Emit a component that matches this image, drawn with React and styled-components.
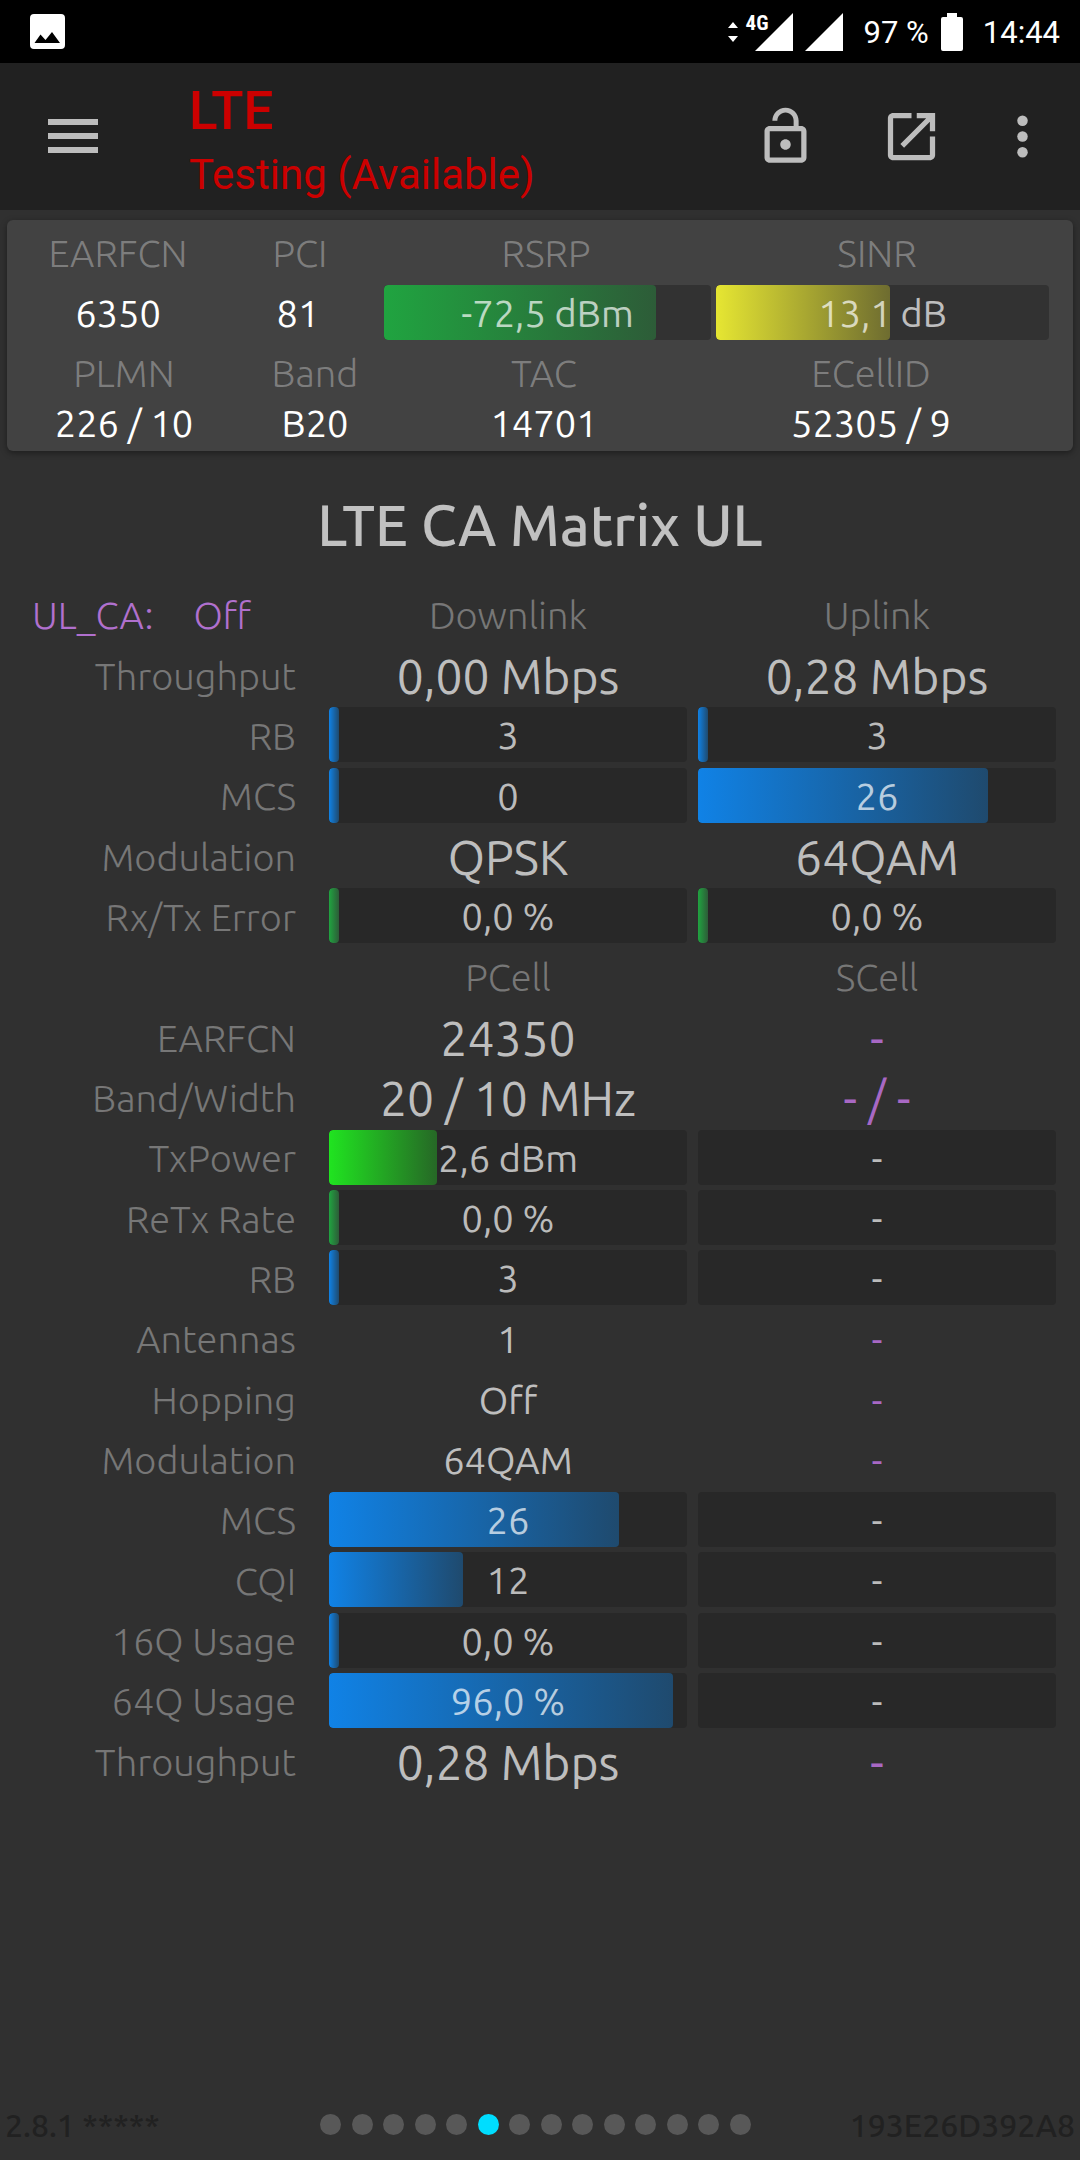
import React from 'react';
import styled, { createGlobalStyle } from 'styled-components';

const GlobalStyle = createGlobalStyle`
  * {
    box-sizing: border-box;
  }

  body {
    margin: 0;
    background: #303030;
    color: rgba(255, 255, 255, 0.7);
    font-family: Ubuntu, 'Noto Sans', 'Open Sans', sans-serif;
    font-size: 38px;
    line-height: 50px;
  }
`;

const Page = styled.div`
  display: flex;
  flex-direction: column;
  min-height: 100vh;
`;

const StatusBar = styled.div`
  display: flex;
  align-items: center;
  justify-content: space-between;
  height: 63px;
  padding: 0 20px 0 30px;
  background: #000;
  color: #fff;
  font-family: Roboto, sans-serif;
  font-size: 31px;
  line-height: 36px;

  & svg {
    display: block;
    fill: #fff;
  }
`;

const StatusGroup = styled.div`
  display: flex;
  align-items: center;
`;

const Signal = styled.div`
  position: relative;
  margin-left: ${(props) => props.$gap}px;
`;

const NetworkType = styled.span`
  position: absolute;
  top: 0;
  left: -9px;
  font-family: 'Roboto Condensed', 'Liberation Sans Narrow', Roboto, sans-serif;
  font-weight: 700;
  font-size: 21px;
  line-height: 20px;
`;

const Percent = styled.span`
  margin: 2px 12px 0 21px;
`;

const Clock = styled.span`
  margin: 2px 0 0 20px;
`;

const AppBar = styled.header`
  display: flex;
  align-items: center;
  height: 147px;
  padding: 0 10px 1px 48px;
  background: #212121;
  font-family: Roboto, sans-serif;
`;

const Titles = styled.div`
  flex: 1;
  margin-left: 91px;
  padding-top: 10px;
  color: #cc0000;
`;

const AppTitle = styled.h1`
  margin: 0;
  font-size: 53px;
  font-weight: 500;
  line-height: 68px;
`;

const AppSubtitle = styled.p`
  margin: 0;
  font-size: 42px;
  line-height: 60px;
`;

const IconButton = styled.button`
  display: flex;
  align-items: center;
  justify-content: center;
  width: ${(props) => props.$width}px;
  height: 126px;
  padding: 0;
  border: 0;
  background: none;

  & svg {
    fill: #bdbdbd;
  }
`;

const Card = styled.section`
  margin: 10px 7px 0;
  padding: 8px 13px 3px 17px;
  border-radius: 6px;
  background: #424242;
  box-shadow: 0 2px 6px rgba(0, 0, 0, 0.4);
  text-align: center;
`;

const CardRow = styled.div`
  display: grid;
  grid-template-columns: ${(props) => props.$columns};
  align-items: center;
  margin: ${(props) => (props.$bars ? '7px 0 8px' : '0')};
`;

const CardLabel = styled.span`
  color: rgba(255, 255, 255, 0.33);
  font-weight: 300;
`;

const CardValue = styled.span`
  color: #fff;
`;

const CardBar = styled.div`
  margin-right: ${(props) => props.$gap || 0}px;
`;

const Track = styled.div`
  display: grid;
  height: 55px;
  border-radius: 4px;
  background: ${(props) => (props.$onCard ? '#323232' : '#282828')};
  text-align: center;
  overflow: hidden;

  & > * {
    grid-area: 1 / 1;
  }
`;

const Fill = styled.div`
  border-radius: 4px;
  background: linear-gradient(to right, ${(props) => props.$from}, ${(props) => props.$to});
`;

const TrackText = styled.span`
  z-index: 1;
  padding-top: 2px;
  line-height: 53px;
`;

const MatrixTitle = styled.h2`
  margin: 36px 0 21px;
  font-size: 57px;
  font-weight: 500;
  line-height: 76px;
  text-align: center;
`;

const MatrixWrap = styled.main`
  padding-right: 18px;
`;

const Matrix = styled.table`
  width: 100%;
  height: 1207px;
  border-collapse: collapse;
  table-layout: fixed;

  & th,
  & td {
    height: 60px;
    padding: 0 6px 0 5px;
    text-align: center;
    vertical-align: middle;
    white-space: nowrap;
  }

  & th {
    padding-top: 2px;
    color: rgba(255, 255, 255, 0.35);
    font-weight: 300;
  }

  & th[scope='row'] {
    padding-right: 28px;
    text-align: right;
  }
`;

const LabelCol = styled.col`
  width: 324px;
`;

const UlCa = styled.div`
  display: flex;
  gap: 40px;
  padding: 2px 0 0 27px;
  color: #b070ce;
  font-weight: 300;
`;

const Value = styled.span`
  display: block;
  padding-top: 2px;
  font-size: ${(props) => (props.$big ? 48 : 38)}px;
  line-height: 54px;
  color: ${(props) => (props.$muted ? '#a868c4' : 'inherit')};
`;

const Footer = styled.footer`
  display: grid;
  grid-template-columns: minmax(0, 320fr) 431px minmax(0, 329fr);
  align-items: center;
  height: 71px;
  margin-top: auto;
  color: #212121;
  font-size: 32px;
  font-weight: 500;
  line-height: 40px;
`;

const Version = styled.span`
  padding-left: 5px;
`;

const DeviceId = styled.span`
  padding-right: 5px;
  text-align: right;
`;

const Dots = styled.div`
  display: flex;
  justify-content: space-between;
`;

const Dot = styled.span`
  width: 21px;
  height: 21px;
  border-radius: 50%;
  background: ${(props) => (props.$active ? '#00ddff' : '#585858')};
`;

const fills = {
  green: ['#20a440', '#2d5c38'],
  yellow: ['#e6e632', '#6e6c30'],
  blue: ['#1082e6', '#1f4a6e'],
  lime: ['#20e420', '#266826'],
};

const Bar = ({ text, percent, color = 'blue', onCard, label }) => (
  <Track
    $onCard={onCard}
    role="meter"
    aria-label={label}
    aria-valuemin={0}
    aria-valuemax={100}
    aria-valuenow={percent || 0}
    aria-valuetext={text}
  >
    {percent > 0 && (
      <Fill $from={fills[color][0]} $to={fills[color][1]} style={{ width: `${percent}%` }} />
    )}
    <TrackText>{text}</TrackText>
  </Track>
);

// an almost empty bar still shows a sliver
const MIN = 2.8;

const linkRows = [
  { label: 'Throughput', cells: [{ text: '0,00 Mbps', big: true }, { text: '0,28 Mbps', big: true }] },
  { label: 'RB', cells: [{ text: '3', percent: MIN }, { text: '3', percent: MIN }] },
  { label: 'MCS', cells: [{ text: '0', percent: MIN }, { text: '26', percent: 81 }] },
  { label: 'Modulation', cells: [{ text: 'QPSK', big: true }, { text: '64QAM', big: true }] },
  {
    label: 'Rx/Tx Error',
    cells: [
      { text: '0,0 %', percent: MIN, color: 'green' },
      { text: '0,0 %', percent: MIN, color: 'green' },
    ],
  },
];

const cellRows = [
  { label: 'EARFCN', cells: [{ text: '24350', big: true }, { text: '-', big: true, muted: true }] },
  { label: 'Band/Width', cells: [{ text: '20 / 10 MHz', big: true }, { text: '- / -', big: true, muted: true }] },
  { label: 'TxPower', cells: [{ text: '2,6 dBm', percent: 30.2, color: 'lime' }, { text: '-', percent: 0 }] },
  { label: 'ReTx Rate', cells: [{ text: '0,0 %', percent: MIN, color: 'green' }, { text: '-', percent: 0 }] },
  { label: 'RB', cells: [{ text: '3', percent: MIN }, { text: '-', percent: 0 }] },
  { label: 'Antennas', cells: [{ text: '1' }, { text: '-', muted: true }] },
  { label: 'Hopping', cells: [{ text: 'Off' }, { text: '-', muted: true }] },
  { label: 'Modulation', cells: [{ text: '64QAM' }, { text: '-', muted: true }] },
  { label: 'MCS', cells: [{ text: '26', percent: 81 }, { text: '-', percent: 0 }] },
  { label: 'CQI', cells: [{ text: '12', percent: 37.4 }, { text: '-', percent: 0 }] },
  { label: '16Q Usage', cells: [{ text: '0,0 %', percent: MIN }, { text: '-', percent: 0 }] },
  { label: '64Q Usage', cells: [{ text: '96,0 %', percent: 96 }, { text: '-', percent: 0 }] },
  { label: 'Throughput', cells: [{ text: '0,28 Mbps', big: true }, { text: '-', big: true, muted: true }] },
];

const MatrixRow = ({ label, cells }) => (
  <tr>
    <th scope="row">{label}</th>
    {cells.map((cell, i) => (
      <td key={i}>
        {cell.percent === undefined ? (
          <Value $big={cell.big} $muted={cell.muted}>
            {cell.text}
          </Value>
        ) : (
          <Bar label={label} {...cell} />
        )}
      </td>
    ))}
  </tr>
);

const SignalIcon = () => (
  <svg width="38" height="38" viewBox="0 0 38 38">
    <path d="M38 0v38H0z" />
  </svg>
);

const Status = () => (
  <StatusBar>
    <svg width="35" height="35" viewBox="0 0 35 35">
      <path
        fillRule="evenodd"
        d="M4 0h27a4 4 0 0 1 4 4v27a4 4 0 0 1-4 4H4a4 4 0 0 1-4-4V4a4 4 0 0 1 4-4zM4.500 29h25.500L22 18l-6.500 8-5-5.500z"
      />
    </svg>
    <StatusGroup>
      <svg width="10" height="20" viewBox="0 0 10 20">
        <path d="M5 0l5 6H0zM0 14h10l-5 6z" />
      </svg>
      <Signal $gap={17}>
        <SignalIcon />
        <NetworkType>4G</NetworkType>
      </Signal>
      <Signal $gap={12}>
        <SignalIcon />
      </Signal>
      <Percent>97 %</Percent>
      <svg width="22" height="38" viewBox="0 0 22 38">
        <path d="M6 0h10v4h4a2 2 0 0 1 2 2v30a2 2 0 0 1-2 2H2a2 2 0 0 1-2-2V6a2 2 0 0 1 2-2h4z" />
      </svg>
      <Clock>14:44</Clock>
    </StatusGroup>
  </StatusBar>
);

const Toolbar = () => (
  <AppBar>
    <IconButton $width={50} aria-label="Menu">
      <svg width="50" height="34" viewBox="0 0 50 34">
        <path d="M0 0h50v6H0zM0 14h50v6H0zM0 28h50v6H0z" />
      </svg>
    </IconButton>
    <Titles>
      <AppTitle>LTE</AppTitle>
      <AppSubtitle>Testing (Available)</AppSubtitle>
    </Titles>
    <IconButton $width={126} aria-label="Unlock">
      <svg width="63" height="63" viewBox="0 0 24 24">
        <path d="M12 17c1.100 0 2-.9 2-2s-.9-2-2-2-2 .9-2 2 .9 2 2 2zm6-9h-1V6c0-2.760-2.240-5-5-5S7 3.240 7 6h1.900c0-1.710 1.390-3.100 3.100-3.100 1.710 0 3.100 1.390 3.100 3.100v2H6c-1.100 0-2 .9-2 2v10c0 1.100.9 2 2 2h12c1.100 0 2-.9 2-2V10c0-1.100-.9-2-2-2zm0 12H6V10h12v10z" />
      </svg>
    </IconButton>
    <IconButton $width={126} aria-label="Open in new window">
      <svg width="63" height="63" viewBox="0 0 24 24">
        <path d="M19 19H5V5h7V3H5c-1.110 0-2 .9-2 2v14c0 1.100.89 2 2 2h14c1.100 0 2-.9 2-2v-7h-2v7zM14 3v2h3.590l-9.830 9.830 1.410 1.410L19 6.410V10h2V3h-7z" />
      </svg>
    </IconButton>
    <IconButton $width={96} aria-label="More options">
      <svg width="63" height="63" viewBox="0 0 24 24">
        <circle cx="12" cy="6" r="2" />
        <circle cx="12" cy="12" r="2" />
        <circle cx="12" cy="18" r="2" />
      </svg>
    </IconButton>
  </AppBar>
);

const ServingCell = () => (
  <Card>
    <CardRow $columns="188fr 176fr 316fr 346fr 10fr">
      <CardLabel>EARFCN</CardLabel>
      <CardLabel>PCI</CardLabel>
      <CardLabel>RSRP</CardLabel>
      <CardLabel>SINR</CardLabel>
    </CardRow>
    <CardRow $columns="188fr 172fr 332fr 333fr 11fr" $bars>
      <CardValue>6350</CardValue>
      <CardValue>81</CardValue>
      <CardBar $gap={5}>
        <Bar label="RSRP" text="-72,5 dBm" percent={83.2} color="green" onCard />
      </CardBar>
      <CardBar>
        <Bar label="SINR" text="13,1 dB" percent={52.3} color="yellow" onCard />
      </CardBar>
    </CardRow>
    <CardRow $columns="200fr 182fr 276fr 378fr">
      <CardLabel>PLMN</CardLabel>
      <CardLabel>Band</CardLabel>
      <CardLabel>TAC</CardLabel>
      <CardLabel>ECellID</CardLabel>
    </CardRow>
    <CardRow $columns="200fr 182fr 276fr 378fr">
      <CardValue>226 / 10</CardValue>
      <CardValue>B20</CardValue>
      <CardValue>14701</CardValue>
      <CardValue>52305 / 9</CardValue>
    </CardRow>
  </Card>
);

const App = () => {
  return (
    <Page>
      <GlobalStyle />
      <Status />
      <Toolbar />
      <ServingCell />
      <MatrixTitle>LTE CA Matrix UL</MatrixTitle>
      <MatrixWrap>
        <Matrix>
          <colgroup>
            <LabelCol />
            <col />
            <col />
          </colgroup>
          <tbody>
            <tr>
              <td>
                <UlCa>
                  <span>UL_CA:</span>
                  <span>Off</span>
                </UlCa>
              </td>
              <th scope="col">Downlink</th>
              <th scope="col">Uplink</th>
            </tr>
            {linkRows.map((row) => (
              <MatrixRow key={row.label} {...row} />
            ))}
            <tr>
              <td />
              <th scope="col">PCell</th>
              <th scope="col">SCell</th>
            </tr>
            {cellRows.map((row) => (
              <MatrixRow key={row.label} {...row} />
            ))}
          </tbody>
        </Matrix>
      </MatrixWrap>
      <Footer>
        <Version>2.8.1 *****</Version>
        <Dots>
          {Array.from({ length: 14 }, (_, i) => (
            <Dot key={i} $active={i === 5} />
          ))}
        </Dots>
        <DeviceId>193E26D392A8</DeviceId>
      </Footer>
    </Page>
  );
};

export default App;
